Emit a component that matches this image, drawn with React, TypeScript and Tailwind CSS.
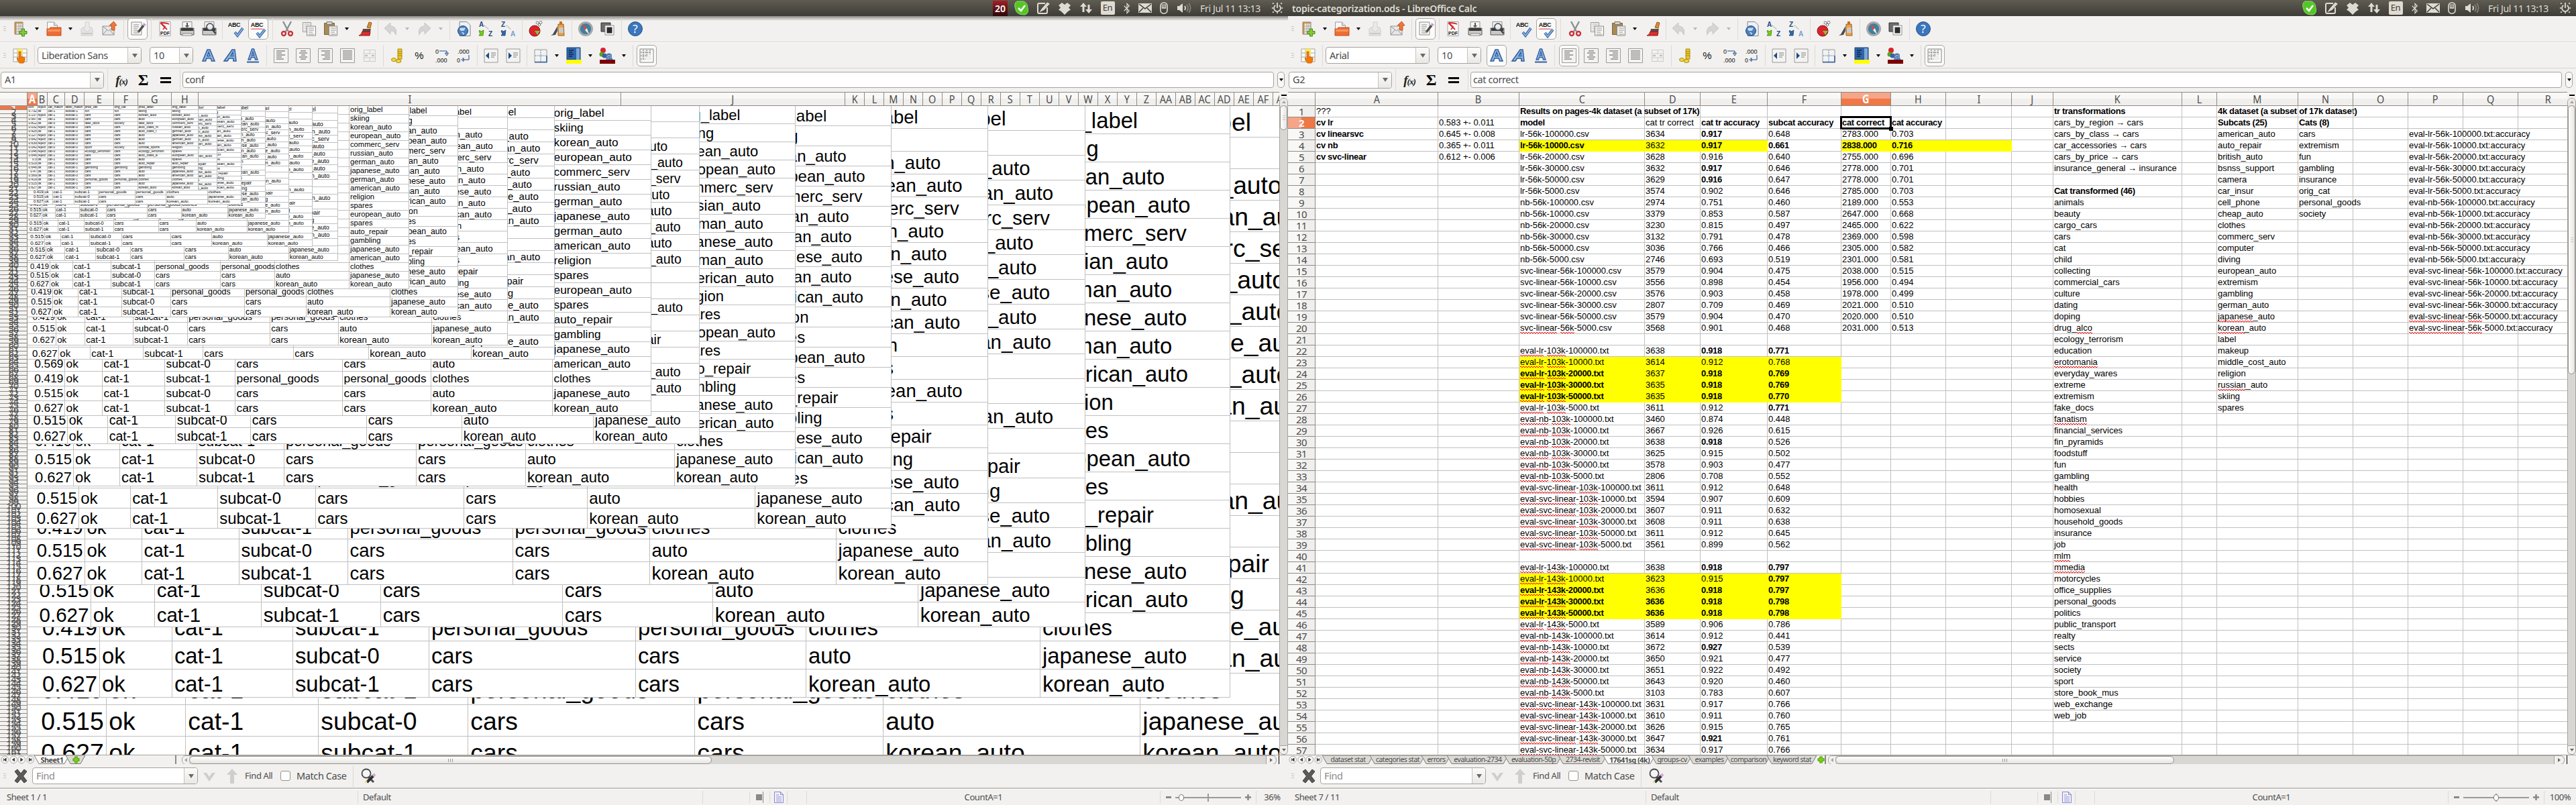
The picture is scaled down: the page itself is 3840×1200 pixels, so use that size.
import React from "react";

const UI = "font-['Noto_Sans',sans-serif] text-[#4c4c4c]";

/* ---------- toolbar icons ---------- */

const sheetLines = (x: number, y: number, color: string) => (
  <path d={`M${x} ${y}h8M${x} ${y + 3}h8M${x} ${y + 6}h6M${x} ${y + 9}h8`} stroke={color} strokeWidth="1" />
);

const icons: Record<string, React.ReactNode> = {
  new: (
    <>
      <path d="M4 2h12v18H4z" fill="#e9e7e0" stroke="#7d7a72" />
      <path d="M4 2h2.500v18H4zM4 2h12v2H4z" fill="#c48d4f" />
      <path d="M6.500 8h9.500M6.500 12h9.500M6.500 16h9.500M10 4v16M13 4v16" stroke="#a9a69e" />
      <path d="M14.500 12h4v3.500h3.500v4h-3.500v3.500h-4v-3.500h-3.500v-4h3.500z" fill="#7fc93b" stroke="#4a8a14" />
    </>
  ),
  open: (
    <>
      <path d="M2.500 2h10l5 5v8h-15z" fill="#f8f8f8" stroke="#9c9c9c" />
      <path d="M12.500 2v5h5" fill="#ddd" stroke="#9c9c9c" />
      <path d="M2 22V12l4 0 1-2h16v12z" fill="#ee6d35" stroke="#c34c17" />
      <path d="M3 13h19v3H3z" fill="#f8955f" />
    </>
  ),
  save: (
    <g opacity=".55">
      <path d="M4 12l2-2h12l2 2v10H3V12z" fill="#d9d9d7" stroke="#b5b5b2" />
      <path d="M9 2h6v8h4l-7 7-7-7h4z" fill="#e6e6e4" stroke="#b5b5b2" />
      <path d="M4 19h16" stroke="#aaa" strokeWidth="2" />
    </g>
  ),
  mail: (
    <>
      <path d="M2 8h17v13H2z" fill="#e8e8e8" stroke="#8f8f8f" />
      <path d="M2 8l8.500 7L19 8M2 21l6-7M19 21l-6-7" fill="none" stroke="#8f8f8f" />
      <path d="M15.500 14V7H12l6.500-6L23 7h-3v7z" fill="#f0773c" stroke="#c9511b" />
    </>
  ),
  edit: (
    <>
      <path d="M3 2h15v19H3z" fill="#f7f7f5" stroke="#8f8f8f" />
      {sheetLines(6, 6, "#888")}
      <path d="M6 18h8" stroke="#888" />
      <path d="M21 7l-8 10" stroke="#4d4d4d" strokeWidth="3.500" />
      <path d="M21.500 6.500l1.500-2" stroke="#c78bd0" strokeWidth="4" />
      <path d="M13.500 16l-2 3 3-1.500z" fill="#dcb257" />
    </>
  ),
  pdf: (
    <>
      <path d="M4 1.500h16v21H4z" fill="#fbfbfb" stroke="#a3a3a3" />
      <path d="M5 3l7 6-3 4M6 3c6 0 10 1 12 2M6 4l9 9" stroke="#d22a2a" strokeWidth="1.800" fill="none" />
      <text x="12" y="21" fontSize="7" fontWeight="700" textAnchor="middle" fill="#222" fontFamily="Liberation Sans">PDF</text>
    </>
  ),
  print: (
    <>
      <path d="M5 1.500h14v9H5z" fill="#f4f4f4" stroke="#8d8d8d" />
      <path d="M11 3h2v4h2.500L12 10 8.500 7H11z" fill="#555" />
      <path d="M2 11h20v10H2z" fill="#c9c9c6" stroke="#5a5a5a" />
      <path d="M3 11h18v4H3z" fill="#3c3c3c" />
      <path d="M5 19h14v3H5z" fill="#efefef" stroke="#777" strokeWidth=".8" />
    </>
  ),
  preview: (
    <>
      <path d="M5 1.500h14v9H5z" fill="#f4f4f4" stroke="#8d8d8d" />
      <path d="M2 11h20v10H2z" fill="#c9c9c6" stroke="#5a5a5a" />
      <path d="M3 11h18v4H3z" fill="#3c3c3c" />
      <circle cx="13" cy="9" r="5" fill="#e8f0f5" fillOpacity=".9" stroke="#444" strokeWidth="1.600" />
      <path d="M16.500 13l5 6" stroke="#444" strokeWidth="2.500" />
    </>
  ),
  spell: (
    <>
      <text x="9" y="9" fontSize="9" fontWeight="700" textAnchor="middle" fill="#111" fontFamily="Liberation Sans" letterSpacing="-.4">ABC</text>
      <path d="M10 17l4 5 8-11" fill="none" stroke="#3465a4" strokeWidth="4" />
      <path d="M10 17l4 5 8-11" fill="none" stroke="#8fb6e4" strokeWidth="1.800" />
    </>
  ),
  autospell: (
    <>
      <text x="10" y="9" fontSize="9" fontWeight="700" textAnchor="middle" fill="#111" fontFamily="Liberation Sans" letterSpacing="-.4">ABC</text>
      <path d="M1 11.500l1.500 1.500 1.500-1.500 1.500 1.500 1.500-1.500 1.500 1.500 1.500-1.500 1.500 1.500 1.500-1.500 1.500 1.500 1.500-1.500 1.500 1.500 1.500-1.500" fill="none" stroke="#e01b1b" />
      <path d="M10 18l4 5 8-10" fill="none" stroke="#3465a4" strokeWidth="4" />
      <path d="M10 18l4 5 8-10" fill="none" stroke="#8fb6e4" strokeWidth="1.800" />
    </>
  ),
  cut: (
    <>
      <path d="M6 1l8 15M18 1l-8 15" stroke="#8d9093" strokeWidth="2.400" />
      <circle cx="7" cy="19" r="3" fill="none" stroke="#c9343b" strokeWidth="2.400" />
      <circle cx="17" cy="19" r="3" fill="none" stroke="#c9343b" strokeWidth="2.400" />
    </>
  ),
  copy: (
    <>
      <path d="M2.500 2.500h12v14h-12z" fill="#f0f0ee" stroke="#9b9b98" />
      {sheetLines(5, 5, "#b0b0ad")}
      <path d="M8.500 8h13v14h-13z" fill="#f5f5f3" stroke="#8a8a87" />
      {sheetLines(11, 11, "#9a9a97")}
    </>
  ),
  paste: (
    <>
      <path d="M2.500 3.500h15v17h-15z" fill="#a88a57" stroke="#7c6338" />
      <path d="M6 1.500h8v4H6z" fill="#d5d5d2" stroke="#777" />
      <path d="M9.500 8h12v14h-12z" fill="#f5f5f3" stroke="#8a8a87" />
      {sheetLines(12, 11, "#9a9a97")}
    </>
  ),
  brush: (
    <>
      <path d="M14 10l3-8 4 1-2 8z" fill="#d98a3a" stroke="#9c5c19" />
      <path d="M8 12l12 0-1 4H7z" fill="#544d45" />
      <path d="M7 16h12l-1 6H2c3-1 4-3 5-6z" fill="#d82f2f" stroke="#971515" />
    </>
  ),
  undo: <path d="M2 11l9-8v5c7 0 10 5 8 13-2-5-4-6-8-6v5z" fill="#d5d5d3" stroke="#c6c6c3" />,
  redo: <path d="M22 11l-9-8v5c-7 0-10 5-8 13 2-5 4-6 8-6v5z" fill="#d5d5d3" stroke="#c6c6c3" />,
  globe: (
    <>
      <path d="M5 1.500h11l5 5v16H5z" fill="#eef2f6" stroke="#7d8791" />
      <circle cx="10" cy="15" r="7.500" fill="#4c80bd" stroke="#204a87" />
      <path d="M5 12c3-3 5 0 8-2 1 3-1 5-4 5s-3-1-4-3zM8 17c3 0 5 1 3 4" fill="#c9dcef" />
    </>
  ),
  az: (
    <>
      <text x="1" y="9" fontSize="10" fontWeight="700" fill="#204a87" fontFamily="Liberation Sans">A</text>
      <text x="15" y="22.500" fontSize="10" fontWeight="700" fill="#204a87" fontFamily="Liberation Sans">Z</text>
      <path d="M9 7l7 6" stroke="#555" strokeDasharray="1.500 1.500" />
      <path d="M2 14l2 2 4-2-1 8H1l2-3-2-3z" fill="#73d216" stroke="#3c7a05" strokeWidth=".8" />
    </>
  ),
  za: (
    <>
      <text x="1" y="9" fontSize="10" fontWeight="700" fill="#204a87" fontFamily="Liberation Sans">Z</text>
      <text x="15" y="22.500" fontSize="10" fontWeight="700" fill="#729fcf" fontFamily="Liberation Sans">A</text>
      <path d="M9 7l7 6" stroke="#555" strokeDasharray="1.500 1.500" />
      <path d="M2 14l2 2 4-2-1 8H1l2-3-2-3z" fill="#3465a4" stroke="#204a87" strokeWidth=".8" />
    </>
  ),
  chart: (
    <>
      <circle cx="10" cy="15" r="8" fill="#d9242b" stroke="#8f0f14" />
      <path d="M10 15h8l-4 6z" fill="#7fc93b" />
      <circle cx="14" cy="3" r="2" fill="#fff" stroke="#777" />
      <circle cx="19" cy="2.500" r="2" fill="#fff" stroke="#777" />
      <circle cx="17" cy="6" r="1.800" fill="#fff" stroke="#777" />
    </>
  ),
  draw: (
    <>
      <path d="M12 5h8l1 17h-9z" fill="#e9a24a" stroke="#9c5c19" />
      <path d="M13 10h7v8h-7z" fill="#c9c9c6" />
      <path d="M14 1h4v4h-4z" fill="#c67020" />
      <path d="M11 8L4 20l-3 2 7-1 3-6z" fill="#4d4d4d" />
    </>
  ),
  compass: (
    <>
      <circle cx="12" cy="12" r="9.500" fill="#3f7f9f" stroke="#a5a9a9" strokeWidth="3" />
      <path d="M7 4l7 7-3 3z" fill="#e6453c" />
      <path d="M17 20l-6-6 3-3z" fill="#f2f2f2" />
    </>
  ),
  gallery: (
    <>
      <path d="M2 3h14v13H2z" fill="#6c6c6c" stroke="#333" />
      <path d="M8 7h13v14H8z" fill="#fff" stroke="#8a8a8a" />
      <path d="M10.500 9.500h8v9h-8z" fill="#2b2b2b" />
    </>
  ),
  help: (
    <>
      <circle cx="12" cy="12" r="10.500" fill="#3b76bd" stroke="#255189" />
      <text x="12" y="18" fontSize="17" textAnchor="middle" fill="#fff" fontFamily="Noto Sans">?</text>
    </>
  ),
  hand: (
    <>
      <path d="M2 2h20v19H2z" fill="#fff" stroke="#a5a29b" />
      <path d="M2 8h20M2 14h20M8 2v19M15 2v19" stroke="#a5a29b" />
      <path d="M8 2h8v7H8z" fill="#fce94f" />
      <path d="M10 6h3v7l6 2v4l-2 4h-6l-4-7 1-1 2 2z" fill="#f57900" stroke="#c85f00" strokeWidth=".8" />
    </>
  ),
  bold: <path d="M3 20L10 3h4l7 17h-4.500l-1.300-4H8.800l-1.300 4zM10 12.500h4L12 7z" fill="#8fb3e0" stroke="#2f5f9f" strokeWidth="1.500" />,
  italic: <path d="M2 20L14 3h4l2 17h-4l-.3-4H9.500L7 20zM12 12.500h3.500L15 7z" fill="#8fb3e0" stroke="#2f5f9f" strokeWidth="1.500" />,
  underline: (
    <>
      <path d="M5 18L10.500 2h3L19 18h-3.500l-1-3.500h-5l-1 3.500zM10.400 11.500h3.200L12 6z" fill="#8fb3e0" stroke="#2f5f9f" strokeWidth="1.300" />
      <path d="M3 21.500h18" stroke="#2f5f9f" strokeWidth="2" />
    </>
  ),
  merge: (
    <g opacity=".5">
      <path d="M3.500 3.500h17v17h-17zM3.500 9h17M3.500 15h17M12 3.500V9M12 15v5.500" fill="none" stroke="#a8a8a8" />
      <path d="M5 12h4M19 12h-4" stroke="#888" strokeWidth="2" />
    </g>
  ),
  coins: (
    <>
      <path d="M13 2h6v15h-6z" fill="#e9c730" stroke="#ab8b09" />
      <path d="M13 6h6M13 9h6M13 12h6" stroke="#ab8b09" />
      <ellipse cx="7" cy="18" rx="3.500" ry="2.500" fill="#f2d648" stroke="#ab8b09" />
      <ellipse cx="14" cy="20" rx="4" ry="2.500" fill="#f2d648" stroke="#ab8b09" />
    </>
  ),
  percent: <text x="12" y="17" fontSize="15" textAnchor="middle" fill="#111" fontFamily="Liberation Sans">%</text>,
  addDec: (
    <>
      <text x="3" y="9" fontSize="9" fill="#111" fontFamily="Liberation Sans">0</text>
      <text x="3" y="22" fontSize="9" fill="#111" fontFamily="Liberation Sans">.000</text>
      <path d="M9 5h11v4M17.500 8l2.500 4 2.500-4z" stroke="#204a87" />
    </>
  ),
  delDec: (
    <>
      <text x="3" y="9" fontSize="9" fill="#111" fontFamily="Liberation Sans">.000</text>
      <text x="2" y="22" fontSize="9" fill="#111" fontFamily="Liberation Sans">0</text>
      <path d="M20 11v7h-9M12 15.500L9 18l3 2.500z" stroke="#204a87" />
    </>
  ),
  outdent: (
    <>
      <path d="M2 2h20v20H2z" fill="#f3f3f1" stroke="#9a9a97" />
      <path d="M12 8h7M12 11h7M12 14h5" stroke="#777" />
      <path d="M9 7v10l-5-5z" fill="#204a87" />
    </>
  ),
  indent: (
    <>
      <path d="M2 2h20v20H2z" fill="#f3f3f1" stroke="#9a9a97" />
      <path d="M12 8h7M12 11h7M12 14h5" stroke="#777" />
      <path d="M5 7v10l5-5z" fill="#204a87" />
    </>
  ),
  borders: (
    <>
      <path d="M3 3h18v19H3z" fill="#f3f3f1" stroke="#9a9a97" />
      <path d="M12 4v17M4 12h16" stroke="#3465a4" strokeDasharray="1.500 1.500" />
      <path d="M3 21.500h18V12" fill="none" stroke="#3465a4" strokeWidth="1.600" />
    </>
  ),
  highlight: (
    <>
      <path d="M2 0h20v18H2z" fill="#2e64a8" stroke="#1d4478" />
      <path d="M16 1h5v17h-5z" fill="#7ea6d8" />
      <path d="M5 4h7M5 7h5M5 10h7M5 13h5" stroke="#0e2850" strokeWidth="1.300" />
      <path d="M1 18h23v6H1z" fill="#ff0" />
    </>
  ),
  fontColor: (
    <>
      <circle cx="6" cy="4" r="4" fill="#d9242b" />
      <circle cx="4" cy="10" r="3.500" fill="#58a618" />
      <circle cx="8" cy="12" r="3.500" fill="#3465a4" />
      <text x="10" y="18" fontSize="17" fontWeight="700" fill="#7ea6d8" stroke="#2f5f9f" strokeWidth=".8" fontFamily="Liberation Sans">a</text>
      <path d="M1 18h23v6H1z" fill="#7b0000" />
    </>
  ),
  grid: (
    <>
      <path d="M2 2h20v20H2z" fill="#efefec" stroke="#8a8a87" />
      <path d="M7 3v13M12 3v10M17 3v7M3 7h14M3 12h10M3 17h7" stroke="#777" strokeDasharray="2 1" />
      <path d="M20 5v15H6" fill="none" stroke="#fff" strokeWidth="2" />
    </>
  ),
  cross: (
    <path d="M3 5l4-3 5 6 5-6 4 3-5.500 7 5.500 7-4 3-5-6-5 6-4-3 5.500-7z" fill="#5a5a58" stroke="#3c3c3a" />
  ),
  down: <path d="M3 7h5l4 6 4-6h5l-9 13z" fill="#cfcecb" />,
  up: <path d="M12 1l8 9h-5v13H9V10H4z" fill="#cfcecb" />,
  findReplace: (
    <>
      <circle cx="10" cy="8" r="6.500" fill="#f5f5f5" stroke="#4a4a4a" strokeWidth="1.800" />
      <path d="M13 13l8 8" stroke="#4a4a4a" strokeWidth="3" />
      <path d="M21 11L11 21" stroke="#2d2d2d" strokeWidth="4" />
      <path d="M23 9l-3 3" stroke="#d9a3d9" strokeWidth="4" />
      <path d="M12 19l-4 4 1-4z" fill="#e8d44d" />
    </>
  ),
};

const alignPaths: Record<string, string> = {
  left: "M5 5h13M5 8h8M5 11h13M5 14h8M5 17h11",
  center: "M8 5h8M6 8h12M9 11h6M6 14h12M8 17h8",
  right: "M6 5h13M11 8h8M6 11h13M11 14h8M8 17h11",
  justify: "M5 5h14M5 8h14M5 11h14M5 14h14M5 17h14",
};

function Icon({ name }: { name: string }) {
  const align = alignPaths[name];
  return (
    <svg viewBox="0 0 24 24" className="size-6 shrink-0 overflow-visible" fill="none">
      {align ? (
        <>
          <path d="M1.500 1.500h21v21h-21z" fill="#f3f3f1" stroke="#9a9a97" />
          <path d={align} stroke="#55534e" strokeWidth="1.200" />
        </>
      ) : (
        icons[name]
      )}
    </svg>
  );
}

type Item = [kind: string, width: number];

const standardBar: Item[] = [
  ["grip", 13], ["new", 34], ["arrow", 16], ["open", 34], ["arrow", 16], ["save", 33], ["mail", 34], ["sep", 8],
  ["*edit", 33], ["sep", 8], ["pdf", 33], ["print", 33], ["preview", 33], ["sep", 7], ["spell", 33], ["*autospell", 33],
  ["sep", 10], ["cut", 33], ["copy", 33], ["paste", 32], ["arrow", 16], ["gap", 3], ["brush", 33], ["sep", 5],
  ["undo", 33], ["dim", 16], ["redo", 33], ["dim", 17], ["sep", 10], ["globe", 33], ["az", 33], ["za", 33], ["sep", 8],
  ["chart", 33], ["draw", 33], ["sep", 8], ["compass", 33], ["gallery", 33], ["sep", 8], ["help", 33],
];

const formatBar = (toggled: boolean): Item[] => [
  [toggled ? "*bold" : "bold", 33], ["italic", 33], ["underline", 33], ["sep", 9],
  [toggled ? "*left" : "left", 33], ["center", 33], ["right", 33], ["justify", 33], ["merge", 33], ["sep", 8],
  ["coins", 33], ["percent", 33], ["addDec", 33], ["delDec", 33], ["sep", 8], ["outdent", 33], ["indent", 33], ["sep", 8],
  ["borders", 33], ["arrow", 16], ["highlight", 33], ["arrow", 17], ["fontColor", 34], ["arrow", 16], ["sep", 10], ["*grid", 32],
];

function ToolItem({ item: [kind, width] }: { item: Item }) {
  const toggled = kind[0] === "*";
  const name = toggled ? kind.slice(1) : kind;
  let content: React.ReactNode = null;
  if (name === "grip") content = <Grip />;
  else if (name === "sep") content = <div className="h-8 w-px bg-[#dcdad6]" />;
  else if (name === "arrow" || name === "dim")
    content = (
      <div className={`size-0 border-x-[3px] border-t-4 border-x-transparent ${name === "dim" ? "border-t-[#b9b7b3]" : "border-t-black"}`} />
    );
  else if (name !== "gap") content = <Icon name={name} />;
  return (
    <div className="flex h-8 shrink-0 items-center justify-center" style={{ width }}>
      {toggled ? (
        <div className="flex h-8 w-[30px] shrink-0 items-center justify-center rounded-[5px] border border-[#aaa7a1] bg-[#fbfbfa]">{content}</div>
      ) : (
        content
      )}
    </div>
  );
}

function Grip() {
  return (
    <div className="flex flex-col gap-[2px]">
      <div className="h-px w-1 bg-[#c9c6c1]" />
      <div className="h-px w-1 bg-[#c9c6c1]" />
      <div className="h-px w-1 bg-[#c9c6c1]" />
    </div>
  );
}

function Combo({ text, className, muted }: { text: string; className: string; muted?: boolean }) {
  return (
    <div className={`flex h-[25px] shrink-0 overflow-hidden rounded-[4px] border border-[#a8a49d] bg-white ${className}`}>
      <div className={`flex flex-1 items-center whitespace-nowrap pl-[5px] text-[14.500px] tracking-[-0.4px] ${muted ? "text-[#8c8c8c]" : ""}`}>{text}</div>
      <div className="flex w-5 items-center justify-center border-l border-[#c5c2bc] bg-linear-to-b from-[#fbfbfa] to-[#e9e8e5]">
        <div className="size-0 border-x-4 border-t-[6px] border-x-transparent border-t-[#6b6964]" />
      </div>
    </div>
  );
}

/* ---------- desktop panel ---------- */

function Tray({ badge }: { badge: boolean }) {
  const stroke = "#dfdbd2";
  const slot = "flex h-6 shrink-0 items-center justify-center";
  return (
    <div className="flex h-6 items-center">
      {badge && (
        <div className="mr-[5px] flex h-[23px] w-[22px] items-center justify-center bg-linear-to-b from-[#a51f26] to-[#2c0708] font-['Noto_Sans'] text-[14px] font-semibold text-white">20</div>
      )}
      <div className={`${slot} w-8`}>
        <svg viewBox="0 0 22 22" className="size-[22px]">
          <path d="M4 1h9c5 1 7 5 7 10 2 5-1 10-5 10-7 0-12-2-13-8C0 8 0 3 4 1z" fill="#55c627" stroke="#8be065" />
          <path d="M6 11l4 4 6-8" fill="none" stroke="#fff" strokeWidth="2.500" />
        </svg>
      </div>
      <div className={`${slot} w-8`}>
        <svg viewBox="0 0 20 20" className="size-5" fill="none" stroke={stroke} strokeWidth="2">
          <path d="M16 9v7a2 2 0 01-2 2H4a2 2 0 01-2-2V5a2 2 0 012-2h9M17 2l-8 9-2 3 4-2 8-9" />
        </svg>
      </div>
      <div className={`${slot} w-8`}>
        <svg viewBox="0 0 20 20" className="size-5" fill={stroke}>
          <path d="M6 2l4 3 4-3 5 4-3 3.500 3 3-4 2.500-5 5-5-5-4-2.500 3-3L1 6z" />
        </svg>
      </div>
      <div className={`${slot} w-8`}>
        <svg viewBox="0 0 20 20" className="size-5" fill={stroke}>
          <path d="M6 2l5 6H7.500v8h-3V8H1zM14 18l-5-6h3.500V5h3v7H19z" />
        </svg>
      </div>
      <div className={`${slot} w-8`}>
        <div className="flex h-5 w-[21px] items-center justify-center rounded-[2px] bg-[#dfdbd2] font-['Noto_Sans'] text-[13px] tracking-[-0.5px] text-[#3c3b37]">En</div>
      </div>
      <div className={`${slot} w-[26px]`}>
        <svg viewBox="0 0 12 18" className="h-[17px] w-3" fill="none" stroke={stroke} strokeWidth="1.300">
          <path d="M1.500 5l8 8L6 16.500v-15L9.500 5l-8 8" />
        </svg>
      </div>
      <div className={`${slot} w-7`}>
        <svg viewBox="0 0 20 14" className="h-[14px] w-5">
          <path d="M0 0h20v14H0z" fill={stroke} />
          <path d="M1 1l9 7 9-7M1 13l6-6M19 13l-6-6" fill="none" stroke="#3c3b37" strokeWidth="1.500" />
        </svg>
      </div>
      <div className={`${slot} w-7`}>
        <svg viewBox="0 0 12 18" className="h-[18px] w-3" fill="none" stroke={stroke} strokeWidth="1.600">
          <rect x="1" y="1" width="10" height="16" rx="4.500" />
          <path d="M6 3v6M3.500 3v6h5V3" strokeWidth="1.300" />
        </svg>
      </div>
      <div className={`${slot} w-[31px]`}>
        <svg viewBox="0 0 22 18" className="h-[18px] w-[22px]" fill="none">
          <path d="M1 6h3l5-4v14l-5-4H1z" fill={stroke} />
          <path d="M12 6c1.500 2 1.500 4 0 6" stroke={stroke} strokeWidth="1.800" />
          <path d="M15 4c2.500 3 2.500 7 0 10M18 2c3.500 4 3.500 10 0 14" stroke="#8b8880" strokeWidth="1.600" />
        </svg>
      </div>
      <div className="flex w-[108px] justify-center whitespace-nowrap font-['Noto_Sans'] text-[14px] tracking-[-0.350px] text-[#dfdbd2]">Fri Jul 11 13:13</div>
      <div className="flex w-8 items-center justify-center">
        <svg viewBox="0 0 20 20" className="size-[18px]" fill="none" stroke={stroke} strokeWidth="2">
          <path d="M7 5.500a5.500 5.500 0 106 0M10 1v9" />
          <path d="M4 3L2.500 1.500M16 3l1.500-1.500M1 10H3M17 10h2M4 16l-1.500 1.500M16 16l1.500 1.500M10 17v2" strokeWidth="2.200" />
        </svg>
      </div>
    </div>
  );
}

/* ---------- left sheet ---------- */

const records = [
  "conf|reject|cat_match|label_match|pred_cat|orig_cat|pred_label|orig_label",
  "0.732|ok|cat-1|subcat-1|fun|fun|skiing|skiing",
  "0.137|reject|cat-1|subcat-1|cars|cars|korean_auto|korean_auto",
  "0.567|ok|cat-1|subcat-0|cars|cars|auto|european_auto",
  "0.812|ok|cat-0|subcat-0|fake_docs|society|fake_docs|commerc_serv",
  "0.032|reject|cat-1|subcat-0|cars|cars|auto_class_m|russian_auto",
  "0.425|ok|cat-1|subcat-0|cars|cars|auto_class_f|german_auto",
  "0.127|reject|cat-1|subcat-0|cars|cars|auto|japanese_auto",
  "0.642|reject|cat-1|subcat-0|cars|cars|auto|german_auto",
  "0.639|reject|cat-1|subcat-0|cars|cars|auto|american_auto",
  "0.042|reject|cat-0|subcat-0|sport|society|combat_sports|religion",
  "0.046|reject|cat-0|subcat-0|ecology_terrorism|cars|ecology_terrorism|spares",
  "0.646|reject|cat-1|subcat-0|cars|cars|auto_class_a|european_auto",
  "0.3|ok|cat-1|subcat-0|cars|cars|auto|spares",
  "0.519|ok|cat-1|subcat-0|cars|cars|auto_repair|auto_repair",
  "0.646|ok|cat-1|subcat-1|gambling|gambling|gambling|gambling",
  "0.47|ok|cat-1|subcat-0|cars|cars|auto|japanese_auto",
  "0.569|ok|cat-1|subcat-0|cars|cars|auto|american_auto",
  "0.419|ok|cat-1|subcat-1|personal_goods|personal_goods|clothes|clothes",
  "0.515|ok|cat-1|subcat-0|cars|cars|auto|japanese_auto",
  "0.627|ok|cat-1|subcat-1|cars|cars|korean_auto|korean_auto",
].map((r) => r.split("|"));

type Layer = { row: number; font: number; edges: number[] };

/* Zoom levels, largest first; edges are the right borders of columns A-H. */
const layers: Layer[] = [
  { row: 47, font: 37.3, edges: [158, 276, 474, 697, 1035, 1316, 1699, 2010] },
  { row: 42, font: 32.8, edges: [148, 256, 436, 639, 947, 1201, 1550, 1833] },
  { row: 37, font: 29.5, edges: [135, 230, 389, 567, 838, 1062, 1368, 1617] },
  { row: 34, font: 27.5, edges: [126, 211, 356, 518, 764, 968, 1246, 1472] },
  { row: 30, font: 24, edges: [117, 194, 324, 470, 691, 875, 1125, 1328] },
  { row: 27, font: 22, edges: [109, 178, 293, 423, 620, 783, 1005, 1185] },
  { row: 24, font: 19.5, edges: [100, 160, 261, 373, 546, 688, 884, 1042] },
  { row: 22, font: 17.3, edges: [96, 152, 245, 350, 510, 642, 823, 970] },
  { row: 18, font: 15, edges: [87, 134, 213, 302, 437, 549, 702, 826] },
  { row: 17, font: 13.3, edges: [83, 126, 198, 279, 402, 504, 643, 756] },
  { row: 15, font: 12.3, edges: [78, 116, 181, 254, 364, 456, 581, 682] },
  { row: 13, font: 11.2, edges: [74, 108, 165, 230, 328, 409, 520, 609] },
  { row: 11, font: 9, edges: [68, 96, 142, 194, 274, 340, 430, 503] },
  { row: 10, font: 8, edges: [66, 90, 133, 181, 254, 315, 398, 465] },
  { row: 9, font: 7.3, edges: [63, 86, 125, 169, 236, 292, 368, 430] },
  { row: 8, font: 6.8, edges: [62, 82, 118, 158, 219, 270, 339, 395] },
  { row: 7, font: 5.8, edges: [65, 78, 110, 146, 201, 247, 309, 359] },
  { row: 6, font: 5.3, edges: [57, 74, 103, 135, 184, 224, 279, 323] },
  { row: 6, font: 4.8, edges: [55, 70, 96, 125, 169, 205, 255, 295] },
];

function ZoomLayer({ row, font, edges }: Layer) {
  const widths = edges.map((e, i) => e - (i ? edges[i - 1] : 40));
  return (
    <div className="col-start-1 row-start-1 w-max self-start bg-white" style={{ fontSize: font }}>
      {records.map((rec, r) => (
        <div key={r} className="flex" style={{ height: row }}>
          {rec.map((text, c) => (
            <div
              key={c}
              className={`flex items-end overflow-hidden border-r border-b border-[#c0c0c0] px-[0.09em] leading-[1.15] whitespace-nowrap ${c === 0 && r > 0 ? "justify-end" : ""}`}
              style={{ width: widths[c] }}
            >
              {text}
            </div>
          ))}
        </div>
      ))}
    </div>
  );
}

const HEAD = "flex shrink-0 items-center justify-center border-r border-[#8f8b84] text-[17px]";

function ColumnHeader({ corner, cols, active }: { corner: number; cols: [string, number][]; active: string }) {
  return (
    <div className="flex h-[21px] shrink-0 overflow-hidden border-y border-[#8f8b84] bg-linear-to-b from-[#f8f8f7] from-50% to-[#f0efed] to-50%">
      <div className={HEAD} style={{ width: corner }} />
      {cols.map(([label, width]) => (
        <div
          key={label}
          className={`${HEAD} ${label === active ? "bg-linear-to-b from-[#f6a588] from-50% to-[#f07746] to-50% text-[15px] font-bold text-white" : ""}`}
          style={{ width }}
        >
          <span className="scale-x-[0.85]">{label}</span>
        </div>
      ))}
    </div>
  );
}

const leftCols: [string, number][] = [
  ["A", 15], ["B", 15], ["C", 26], ["D", 29], ["E", 44], ["F", 36], ["G", 50], ["H", 40], ["I", 630], ["J", 334],
  ...["K", "L", "M", "N", "O", "P", "Q", "R", "S", "T", "U", "V", "W", "X", "Y", "Z", "AA", "AB", "AC", "AD", "AE", "AF"].map(
    (c): [string, number] => [c, 29],
  ),
  ["AG", 29],
];

function LeftSheet() {
  return (
    <div className="flex min-w-0 flex-1 flex-col">
      <ColumnHeader corner={41} cols={leftCols} active="A" />
      <div className="flex h-[967px] overflow-hidden bg-white">
        <div className="w-[41px] shrink-0 border-r border-[#8f8b84] bg-[#f4f3f1]">
          {Array.from({ length: 162 }, (_, i) => (
            <div
              key={i}
              className={`flex h-[6px] items-center justify-center border-b border-[#8f8b84] text-[14px] leading-none tracking-[-0.8px] ${i === 0 ? "overflow-hidden bg-[#f07746] font-bold text-white" : ""}`}
            >
              <span>{i + 1}</span>
            </div>
          ))}
        </div>
        <div className="grid min-w-0 flex-1 overflow-hidden font-['Liberation_Sans',sans-serif] text-black">
          {layers.map((l, i) => (
            <ZoomLayer key={i} {...l} />
          ))}
        </div>
      </div>
    </div>
  );
}

/* ---------- right sheet ---------- */

const rightCols: [string, number][] = [
  ["A", 183], ["B", 121], ["C", 187], ["D", 83], ["E", 100], ["F", 110], ["G", 74], ["H", 82], ["I", 98], ["J", 62],
  ["K", 192], ["L", 52], ["M", 121], ["N", 82], ["O", 82], ["P", 82], ["Q", 82], ["R", 90],
];

/* "*" marks bold text, "~...~" marks a misspelled run. */
const colA = ["???", "*cv lr", "*cv linearsvc", "*cv nb", "*cv svc-linear"];
const colB = ["", "0.583 +- 0.011", "0.645 +- 0.008", "0.365 +- 0.011", "0.612 +- 0.006"];

const results = `
model|cat tr correct|*cat tr accuracy|*subcat accuracy|*cat correct|*cat accuracy
lr-56k-100000.csv|3634|*0.917|0.648|2783.000|0.703
*lr-56k-10000.csv|3632|*0.917|*0.661|*2838.000|*0.716
lr-56k-20000.csv|3628|0.916|0.640|2755.000|0.696
lr-56k-30000.csv|3632|*0.917|0.646|2778.000|0.701
lr-56k-50000.csv|3629|*0.916|0.647|2778.000|0.701
lr-56k-5000.csv|3574|0.902|0.646|2785.000|0.703
nb-56k-100000.csv|2974|0.751|0.460|2189.000|0.553
nb-56k-10000.csv|3379|0.853|0.587|2647.000|0.668
nb-56k-20000.csv|3230|0.815|0.497|2465.000|0.622
nb-56k-30000.csv|3132|0.791|0.478|2369.000|0.598
nb-56k-50000.csv|3036|0.766|0.466|2305.000|0.582
nb-56k-5000.csv|2746|0.693|0.519|2301.000|0.581
svc-linear-56k-100000.csv|3579|0.904|0.475|2038.000|0.515
svc-linear-56k-10000.csv|3556|0.898|0.454|1956.000|0.494
svc-linear-56k-20000.csv|3576|0.903|0.458|1978.000|0.499
svc-linear-56k-30000.csv|2807|0.709|0.469|2021.000|0.510
svc-linear-56k-50000.csv|3579|0.904|0.470|2020.000|0.510
~svc-linear~-~56k~-5000.csv|3568|0.901|0.468|2031.000|0.513
|
~eval-lr~-~103k~-100000.txt|3638|*0.918|*0.771
~eval-lr~-~103k~-10000.txt|3614|0.912|0.768
*~eval-lr~-~103k~-20000.txt|3637|*0.918|*0.769
*~eval-lr~-~103k~-30000.txt|3635|*0.918|*0.769
*~eval-lr~-~103k~-50000.txt|3635|*0.918|*0.770
~eval-lr~-~103k~-5000.txt|3611|0.912|*0.771
~eval-nb~-~103k~-100000.txt|3460|0.874|0.448
~eval-nb~-~103k~-10000.txt|3667|0.926|0.615
~eval-nb~-~103k~-20000.txt|3638|*0.918|0.526
~eval-nb~-~103k~-30000.txt|3625|0.915|0.502
~eval-nb~-~103k~-50000.txt|3578|0.903|0.477
~eval-nb~-~103k~-5000.txt|2806|0.708|0.552
~eval-svc-linear~-~103k~-100000.txt|3611|0.912|0.648
~eval-svc-linear~-~103k~-10000.txt|3594|0.907|0.609
~eval-svc-linear~-~103k~-20000.txt|3607|0.911|0.632
~eval-svc-linear~-~103k~-30000.txt|3608|0.911|0.638
~eval-svc-linear~-~103k~-50000.txt|3611|0.912|0.645
~eval-svc-linear~-~103k~-5000.txt|3561|0.899|0.562
|
~eval-lr~-~143k~-100000.txt|3638|*0.918|*0.797
~eval-lr~-~143k~-10000.txt|3623|0.915|*0.797
*~eval-lr~-~143k~-20000.txt|3636|*0.918|*0.797
*~eval-lr~-~143k~-30000.txt|*3636|*0.918|*0.798
*~eval-lr~-~143k~-50000.txt|*3636|*0.918|*0.798
~eval-lr~-~143k~-5000.txt|3589|0.906|0.786
~eval-nb~-~143k~-100000.txt|3614|0.912|0.441
~eval-nb~-~143k~-10000.txt|3672|*0.927|0.539
~eval-nb~-~143k~-20000.txt|3650|0.921|0.477
~eval-nb~-~143k~-30000.txt|3651|0.922|0.492
~eval-nb~-~143k~-50000.txt|3643|0.920|0.460
~eval-nb~-~143k~-5000.txt|3103|0.783|0.607
~eval-svc-linear~-~143k~-100000.txt|3631|0.917|0.766
~eval-svc-linear~-~143k~-10000.txt|3610|0.911|0.760
~eval-svc-linear~-~143k~-20000.txt|3626|0.915|0.765
~eval-svc-linear~-~143k~-30000.txt|3647|*0.921|0.761
~eval-svc-linear~-~143k~-50000.txt|3634|0.917|0.766`
  .trim()
  .split("\n")
  .map((l) => l.split("|"));
results[0][0] = "*model";
results.unshift(["*Results on pages-4k dataset (a subset of 17k)"]);

const colK =
  "*tr transformations|cars_by_region → cars|cars_by_class → cars|car_accessories → cars|cars_by_price → cars|insurance_general → insurance||*Cat transformed (46)|animals|beauty|cargo_cars|cars|cat|child|collecting|commercial_cars|culture|dating|doping|drug_~alco~|ecology_terrorism|education|~erotomania~|everyday_wares|extreme|extremism|fake_docs|~fanatism~|financial_services|fin_pyramids|foodstuff|fun|gambling|health|hobbies|homosexual|household_goods|insurance|job|~mlm~|~mmedia~|motorcycles|office_supplies|personal_goods|politics|public_transport|realty|sects|service|society|sport|store_book_mus|web_exchange|web_job".split("|");
const colM =
  "*4k dataset (a subset of 17k dataset)|*Subcats (25)|american_auto|auto_repair|british_auto|bsnss_support|camera|car_insur|cell_phone|cheap_auto|clothes|commerc_serv|computer|diving|european_auto|extremism|gambling|german_auto|~japanese~_auto|~korean~_auto|label|makeup|middle_cost_auto|religion|~russian~_auto|skiing|spares".split("|");
const colN = "|*Cats (8)|cars|extremism|fun|gambling|insurance|orig_cat|personal_goods|society".split("|");
const sizes = ["100000", "10000", "20000", "30000", "50000", "5000"];
const colP = [
  "",
  "",
  ...["lr", "nb", "svc-linear"].flatMap((m) =>
    sizes.map((s) =>
      m === "svc-linear" && (s === "50000" || s === "5000") ? `~eval-${m}~-~56k~-${s}.txt:accuracy` : `eval-${m}-56k-${s}.txt:accuracy`,
    ),
  ),
];

function cellText(r: number, c: number): string {
  const label = rightCols[c][0];
  if (c >= 2 && c <= 7) return results[r]?.[c - 2] ?? "";
  const col = { A: colA, B: colB, K: colK, M: colM, N: colN, P: colP }[label];
  return col?.[r] ?? "";
}

function isYellow(r: number, c: number) {
  if (r === 3) return (c >= 2 && c <= 4) || (c >= 6 && c <= 8);
  return ((r >= 22 && r <= 25) || (r >= 41 && r <= 44)) && c >= 2 && c <= 5;
}

function RightCell({ r, c }: { r: number; c: number }) {
  const raw = cellText(r, c);
  const bold = raw[0] === "*";
  const parts = (bold ? raw.slice(1) : raw).split("~");
  const selected = r === 1 && c === 6;
  return (
    <div
      className={`relative flex h-[17px] shrink-0 items-end border-r border-b pl-px leading-[16px] whitespace-nowrap ${bold ? "font-bold tracking-[-0.320px]" : "tracking-[-0.030px]"} ${isYellow(r, c) ? "border-[#ff0] bg-[#ff0]" : "border-[#c0c0c0]"}`}
      style={{ width: rightCols[c][1] }}
    >
      {parts.map((p, i) =>
        i % 2 ? (
          <span key={i} className="h-4 bg-[repeating-linear-gradient(90deg,#ff0000_0_2px,transparent_2px_4px),repeating-linear-gradient(90deg,transparent_0_2px,#ff0000_2px_4px)] bg-[length:100%_1px,100%_1px] bg-[position:0_14px,0_15px] bg-no-repeat">
            {p}
          </span>
        ) : (
          <span key={i} className="whitespace-pre">{p}</span>
        ),
      )}
      {selected && (
        <>
          <div className="absolute -top-[2px] -left-[2px] h-[20px] w-[77px] border-[3px] border-black" />
          <div className="absolute -right-[4px] -bottom-[4px] z-10 size-[6px] bg-black" />
        </>
      )}
    </div>
  );
}

function RightSheet() {
  return (
    <div className="flex min-w-0 flex-1 flex-col">
      <ColumnHeader corner={41} cols={rightCols} active="G" />
      <div className="flex h-[967px] overflow-hidden bg-white">
        <div className="w-[41px] shrink-0 border-r border-[#8f8b84]">
          {Array.from({ length: 57 }, (_, i) => (
            <div
              key={i}
              className={`flex h-[17px] items-center justify-center border-b border-[#8f8b84] text-[15px] leading-none tracking-[-0.5px] ${i === 1 ? "bg-linear-to-r from-[#f6a588] from-50% to-[#f07746] to-50% font-bold text-white" : "bg-linear-to-r from-[#f8f8f7] from-50% to-[#f0efed] to-50%"}`}
            >
              {i + 1}
            </div>
          ))}
        </div>
        <div className="min-w-0 flex-1 font-['Liberation_Sans',sans-serif] text-[13px] text-black">
          {Array.from({ length: 57 }, (_, r) => (
            <div key={r} className="flex">
              {rightCols.map((col, c) => (
                <RightCell key={col[0]} r={r} c={c} />
              ))}
            </div>
          ))}
        </div>
      </div>
    </div>
  );
}

/* ---------- window chrome ---------- */

function VScroll({ thumb }: { thumb: string }) {
  return (
    <div className="flex h-[988px] w-[13px] shrink-0 flex-col items-center bg-[#f2f1ef] pt-1">
      <div className="h-[3px] w-[8px] border-t-2 border-black bg-white" />
      <div className="mt-[2px] flex min-h-0 w-full flex-1 flex-col overflow-hidden rounded-[6px] border border-[#a8a49d] bg-[#d9d7d4]">
        <div className="flex h-[10px] shrink-0 items-center justify-center bg-[#eceae8]">
          <div className="size-0 border-x-[3px] border-b-4 border-x-transparent border-b-[#a8a49d]" />
        </div>
        <div className={`flex shrink-0 items-center justify-center rounded-[6px] border border-[#96928b] bg-linear-to-r from-white to-[#e6e4e1] ${thumb}`}>
          <Grip />
        </div>
        <div className="flex-1" />
        <div className="flex h-[13px] shrink-0 items-center justify-center rounded-b-[6px] border-t border-[#a8a49d] bg-[#f2f1ef]">
          <div className="size-0 border-x-[3px] border-t-4 border-x-transparent border-t-[#6b6964]" />
        </div>
      </div>
    </div>
  );
}

function HScroll({ thumb }: { thumb: number }) {
  return (
    <div className="flex h-[14px] min-w-0 flex-1 overflow-hidden rounded-[6px] border border-[#a8a49d] bg-[#d9d7d4]">
      <div className="flex w-[10px] items-center justify-center bg-[#f2f1ef]">
        <div className="size-0 border-y-[3px] border-r-4 border-y-transparent border-r-[#a8a49d]" />
      </div>
      <div className="flex shrink-0 items-center justify-center gap-[2px] rounded-[6px] border border-[#96928b] bg-linear-to-b from-white to-[#e6e4e1]" style={{ width: thumb }}>
        <div className="h-[5px] w-px bg-[#9c9992]" />
        <div className="h-[5px] w-px bg-[#9c9992]" />
        <div className="h-[5px] w-px bg-[#9c9992]" />
      </div>
      <div className="flex-1" />
      <div className="flex w-[15px] items-center justify-center rounded-r-[6px] border-l border-[#a8a49d] bg-[#f2f1ef]">
        <div className="size-0 border-y-[3px] border-l-4 border-y-transparent border-l-[#6b6964]" />
      </div>
    </div>
  );
}

function SheetTab({ label, width, active }: { label: React.ReactNode; width: number; active?: boolean }) {
  return (
    <div className="relative flex h-[13px] shrink-0 items-center justify-center" style={{ width }}>
      <svg viewBox={`0 0 ${width} 13`} className="absolute inset-0 h-full w-full overflow-visible">
        <path d={`M-3 0L4 12.500H${width - 5}L${width + 2} 0z`} fill={active ? "#fff" : "#dcdad7"} stroke="#7d7a74" />
      </svg>
      <span className={`relative leading-none whitespace-nowrap ${active ? "text-[11px] font-bold tracking-[-0.6px]" : "text-[10.500px] tracking-[-0.5px]"}`}>{label}</span>
    </div>
  );
}

function Plus() {
  return (
    <svg viewBox="0 0 12 12" className="size-[11px]">
      <path d="M4 1h4v3h3v4H8v3H4V8H1V4h3z" fill="#73d216" stroke="#4e9a06" />
    </svg>
  );
}

const rightTabs: [string, number][] = [
  ["dataset stat", 71], ["categories stat", 77], ["errors", 38], ["evaluation-2734", 86], ["evaluation-50p", 80],
  ["2734-revisit", 67], ["17641sg (4k)", 72], ["groups-cv", 55], ["examples", 56], ["comparison", 61], ["keyword stat", 69],
];

function NavButton({ d }: { d: string }) {
  return (
    <svg viewBox="0 0 13 13" className="h-[13px] w-[12.500px]">
      <circle cx="6.500" cy="6.500" r="5.500" fill="#fafaf9" stroke="#a8a49d" />
      <path d={d} fill="#3c3c3c" stroke="#3c3c3c" strokeWidth=".8" />
    </svg>
  );
}

function StatusSep({ className }: { className: string }) {
  return <div className={`h-[19px] border-l border-[#dcdad6] ${className}`} />;
}

type WindowProps = {
  title?: string;
  badge?: boolean;
  font: string;
  toggled: boolean;
  cell: string;
  formula: string;
  right?: boolean;
};

function CalcWindow({ title = "", badge = false, font, toggled, cell, formula, right = false }: WindowProps) {
  return (
    <div className={`flex h-[1200px] w-[1920px] shrink-0 flex-col overflow-hidden bg-[#f2f1ef] ${UI}`}>
      <div className="flex h-6 shrink-0 items-center justify-between bg-linear-to-b from-[#5f5c52] to-[#3d3c37]">
        <div className="pl-[6px] text-[14px] font-semibold tracking-[-0.2px] whitespace-nowrap text-[#dfdbd2]">{title}</div>
        <Tray badge={badge} />
      </div>
      <div className={`flex h-[39px] shrink-0 items-center border-b border-[#d6d4d0] pb-px ${right ? "" : "bg-linear-to-b from-[#8d8b86] to-[#f2f1ef] to-[7px]"}`}>
        {standardBar.map((it, i) => (
          <ToolItem key={i} item={it} />
        ))}
      </div>
      <div className="flex h-[39px] shrink-0 items-center border-t border-b border-t-white border-b-[#d6d4d0]">
        <ToolItem item={["grip", 13]} />
        <ToolItem item={["hand", 34]} />
        <ToolItem item={["sep", 9]} />
        <Combo text={font} className="w-[155px]" />
        <Combo text="10" className="mr-[6px] ml-[12px] w-[65px]" />
        {formatBar(toggled).map((it, i) => (
          <ToolItem key={i} item={it} />
        ))}
      </div>
      <div className="flex h-[35px] shrink-0 items-center pb-px">
        <Combo text={cell} className="ml-px w-[154px]" />
        <ToolItem item={["sep", 10]} />
        <div className="w-[32px] text-center font-['Liberation_Serif'] text-[19px] leading-none font-bold tracking-[-1px] text-[#222] italic">
          f<span className="text-[13px]">(x)</span>
        </div>
        <div className="w-[33px] text-center font-['Liberation_Serif'] text-[24px] leading-none font-bold text-black">Σ</div>
        <div className="flex w-[34px] flex-col items-center gap-[3px]">
          <div className="h-[3px] w-[16px] bg-black" />
          <div className="h-[3px] w-[16px] bg-black" />
        </div>
        <ToolItem item={["sep", 8]} />
        <div className="flex h-[24px] w-[1627px] items-center rounded-[4px] border border-[#a8a49d] bg-white pl-[3px] text-[14.500px] tracking-[-0.4px]">{formula}</div>
        <div className="ml-[5px] flex h-[24px] w-[11px] items-center justify-center rounded-[5px] border border-[#a8a49d] bg-[#f8f8f7]">
          <div className="size-0 border-x-[3px] border-t-4 border-x-transparent border-t-black" />
        </div>
      </div>
      <div className="flex h-[988px] shrink-0">
        {right ? <RightSheet /> : <LeftSheet />}
        <VScroll thumb={right ? "h-[401px]" : "h-[37px]"} />
      </div>
      <div className="flex h-[14px] shrink-0 overflow-hidden border-t border-[#a8a49d]">
        <div className="flex w-[54px] shrink-0 pl-px">
          <NavButton d="M8.500 4v5L5 6.500zM4.500 4v5" />
          <NavButton d="M8 4v5L4.500 6.500z" />
          <NavButton d="M5 4v5l3.500-2.500z" />
          <NavButton d="M4.500 4v5L8 6.500zM8.500 4v5" />
        </div>
        {right ? (
          <>
            {rightTabs.map(([label, w]) => (
              <SheetTab key={label} label={label} width={w} active={label === "17641sg (4k)"} />
            ))}
            <div className="flex w-[14px] items-center justify-end overflow-hidden"><Plus /></div>
            <div className="w-[5px] border-l-2 border-[#8f8b84]" />
            <HScroll thumb={505} />
          </>
        ) : (
          <>
            <SheetTab label="Sheet1" width={47} active />
            <SheetTab label={<Plus />} width={24} />
            <div className="w-[138px] border-r-2 border-[#8f8b84]" />
            <div className="w-[8px]" />
            <HScroll thumb={779} />
          </>
        )}
        <div className="mr-[13px] ml-[3px] w-px bg-black" />
      </div>
      <div className="flex h-[37px] shrink-0 items-center border-b-2 border-[#c5c3bf] text-[14.500px] tracking-[-0.4px]">
        <ToolItem item={["grip", 13]} />
        <ToolItem item={["cross", 35]} />
        <Combo text="Find" className="w-[247px]" muted />
        <ToolItem item={["down", 34]} />
        <ToolItem item={["up", 34]} />
        <div className="w-[55px] pl-[2px] text-[13px] whitespace-nowrap">Find All</div>
        <div className="h-[15px] w-[15px] rounded-[3px] border border-[#96928b] bg-white" />
        <div className="w-[90px] pl-[9px] whitespace-nowrap">Match Case</div>
        <ToolItem item={["sep", 6]} />
        <ToolItem item={["findReplace", 38]} />
      </div>
      <div className="flex flex-1 items-center border-t border-white text-[13px] tracking-[-0.4px] whitespace-nowrap">
        <div className="w-[533px] pl-[10px]">{right ? "Sheet 7 / 11" : "Sheet 1 / 1"}</div>
        <div className="flex h-[19px] w-[514px] items-center border-l border-[#dcdad6] pl-[7px]">Default</div>
        <StatusSep className="w-[70px]" />
        <div className="flex w-[30px] items-center justify-center gap-px border-l border-[#dcdad6]">
          <div className="h-[9px] w-[9px] bg-[#8a8883]" />
          <div className="h-[17px] w-px bg-[#8a8883]" />
        </div>
        <div className="flex w-[26px] justify-center border-l border-[#dcdad6]">
          <svg viewBox="0 0 14 17" className="h-[17px] w-[14px]" fill="none" stroke="#8686e0">
            <path d="M.500 .500h9l4 4v12H.500zM9.500 .500v4h4M3 5h4M3 8h8M3 11h8M3 14h8" />
          </svg>
        </div>
        <StatusSep className="w-[29px]" />
        <div className="flex h-[19px] w-[527px] items-center justify-center border-l border-[#dcdad6]">CountA=1</div>
        <div className="flex h-[19px] w-[143px] items-center border-l border-[#dcdad6] pl-2">
          <div className="h-[3px] w-2 bg-[#8a8883]" />
          <div className="relative mx-[6px] flex h-4 w-[98px] items-center">
            <div className="h-[2px] w-full bg-[#9c9a95]" />
            <div className="absolute left-[48px] h-3 w-[2px] bg-[#9c9a95]" />
            <div className={`absolute h-[10px] w-[8px] rounded-full border border-[#7d7a74] bg-white ${right ? "left-[45px]" : "left-[5px]"}`} />
          </div>
          <svg viewBox="0 0 9 9" className="size-[9px]"><path d="M4.500 0v9M0 4.500h9" stroke="#8a8883" strokeWidth="2.500" /></svg>
        </div>
        <div className="flex h-[19px] flex-1 items-center justify-center border-l border-[#dcdad6]">{right ? "100%" : "36%"}</div>
      </div>
    </div>
  );
}

export default function App() {
  return (
    <div className="flex h-[1200px] w-[3840px] overflow-hidden">
      <CalcWindow badge font="Liberation Sans" toggled={false} cell="A1" formula="conf" />
      <CalcWindow right title="topic-categorization.ods - LibreOffice Calc" font="Arial" toggled cell="G2" formula="cat correct" />
    </div>
  );
}
